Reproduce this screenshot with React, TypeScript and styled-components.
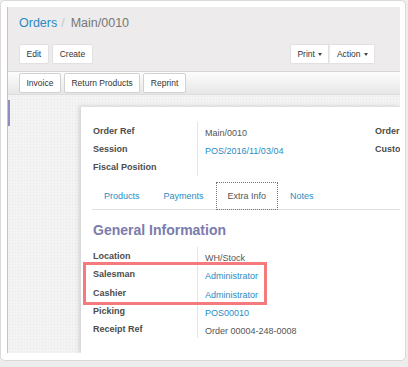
import React from 'react';
import styled, { createGlobalStyle, css } from 'styled-components';

const GlobalStyle = createGlobalStyle`
  html, body {
    margin: 0;
    padding: 0;
    background: #ededed;
    font-family: "Liberation Sans", Arial, Helvetica, sans-serif;
  }
  * { box-sizing: border-box; }
`;

const LINK = '#2a8cc4';

/** Frame */
const Frame = styled.div`
  width: 406px;
  height: 361px;
  background: #fff;
  border: 1px solid #dadada;
  border-radius: 5px;
  padding: 6px 5px 7px 6px;
`;

const Screen = styled.div`
  position: relative;
  height: 100%;
  display: flex;
  flex-direction: column;
  border-left: 1px solid #c4c4c4;
  overflow: hidden;
`;

/** Control panel */
const ControlPanel = styled.div`
  background: #edebeb;
  height: 64px;
  padding: 6px 25px 0 11px;
  display: flex;
  flex-direction: column;
`;

const Breadcrumb = styled.div`
  font-size: 12.5px;
  line-height: 20px;
  color: #777;
  display: flex;
  gap: 4px;
`;

const Crumb = styled.span<{ link?: boolean }>`
  color: ${p => (p.link ? LINK : '#777')};
`;

const Sep = styled.span`
  color: #c8c8c8;
  margin-right: 2px;
`;

const ButtonsRow = styled.div`
  margin-top: 11px;
  display: flex;
  justify-content: space-between;
`;

const ButtonGroup = styled.div<{ joined?: boolean }>`
  display: flex;
  gap: ${p => (p.joined ? '0' : '3.5px')};
`;

const Button = styled.button<{ joined?: boolean; grad?: boolean }>`
  height: 20px;
  padding: 0 6.5px;
  font-family: inherit;
  font-size: 8.5px;
  color: #333;
  background: #fff;
  border: 1px solid #e2e0e0;
  border-radius: 2px;
  display: flex;
  align-items: center;
  gap: 3px;
  ${p =>
    p.joined &&
    css`
      border-radius: 0;
      &:first-child {
        border-radius: 2px 0 0 2px;
      }
      &:last-child {
        border-radius: 0 2px 2px 0;
        border-left-color: #eaeaea;
      }
    `}
  ${p =>
    p.grad &&
    css`
      border-color: #d2d2d2;
    `}
`;

const Caret = styled.span`
  width: 0;
  height: 0;
  border-left: 2.5px solid transparent;
  border-right: 2.5px solid transparent;
  border-top: 3px solid #444;
  margin-top: 1px;
`;

/** Status bar */
const StatusBar = styled.div`
  height: 24px;
  border-top: 1px solid #d6d6d6;
  border-bottom: 1px solid #dcdcdc;
  background: linear-gradient(#fdfdfd, #e6e6e6);
  padding: 0 0 0 11px;
  display: flex;
  align-items: center;
  gap: 3px;
`;

/** Sheet area */
const SheetArea = styled.div`
  flex: 1;
  display: flex;
  background-color: #f3f3f3;
  background-image: radial-gradient(#e8e8e8 0.6px, transparent 0.8px);
  background-size: 3px 3px;
  min-height: 0;
`;

const Sidebar = styled.div`
  width: 73px;
  flex-shrink: 0;
  padding-top: 5px;
`;

const MenuMarker = styled.div`
  width: 2px;
  height: 26px;
  background: #8e8dbf;
`;

const Sheet = styled.div`
  flex: 1;
  margin-top: 11px;
  background: #fff;
  border-top: 1px solid #e2e2e2;
  box-shadow: -2px 0 4px rgba(0, 0, 0, 0.14);
  padding: 15px 0 0 12px;
  overflow: hidden;
  font-size: 9px;
`;

const TopGroups = styled.div`
  display: flex;
  width: 400px;
`;

const Group = styled.div<{ width?: number; rowH?: number }>`
  display: grid;
  grid-template-columns: 104px 1fr;
  grid-auto-rows: ${p => p.rowH || 18}px;
  width: ${p => (p.width ? `${p.width}px` : 'auto')};
  flex-shrink: 0;
  line-height: ${p => p.rowH || 18}px;
`;

const Label = styled.div`
  font-weight: bold;
  color: #4c4c4c;
  white-space: nowrap;
`;

const Value = styled.div<{ link?: boolean }>`
  border-left: 1px solid #e4e4e4;
  padding: 2px 0 0 7px;
  color: ${p => (p.link ? LINK : '#555')};
  white-space: nowrap;
`;

const RightLabel = styled.div`
  font-weight: bold;
  color: #4c4c4c;
  line-height: 18px;
`;

/** Tabs */
const Tabs = styled.div`
  margin: 6px 0 0 -1px;
  display: flex;
  height: 28px;
  border-bottom: 1px solid #e2e2e2;
  width: 400px;
`;

const Tab = styled.div<{ active?: boolean }>`
  padding: 0 11px;
  line-height: 26px;
  height: 28px;
  color: ${p => (p.active ? '#555' : LINK)};
  border: 1px dotted ${p => (p.active ? '#777' : 'transparent')};
`;

const Heading = styled.h2`
  margin: 10px 0 7px;
  font-size: 14px;
  line-height: 20px;
  font-weight: bold;
  color: #7c7bad;
`;

/** Annotation */
const Highlight = styled.div`
  position: absolute;
  left: 75px;
  top: 255px;
  width: 184px;
  height: 43px;
  border: 3px solid #f47a7e;
`;

const topRows: [string, string, boolean][] = [
  ['Order Ref', 'Main/0010', false],
  ['Session', 'POS/2016/11/03/04', true],
  ['Fiscal Position', '', false],
];

const infoRows: [string, string, boolean][] = [
  ['Location', 'WH/Stock', false],
  ['Salesman', 'Administrator', true],
  ['Cashier', 'Administrator', true],
  ['Picking', 'POS00010', true],
  ['Receipt Ref', 'Order 00004-248-0008', false],
];

const tabs = ['Products', 'Payments', 'Extra Info', 'Notes'];

export default function App() {
  return (
    <>
      <GlobalStyle />
      <Frame>
        <Screen>
          <ControlPanel>
            <Breadcrumb>
              <Crumb link>Orders</Crumb>
              <Sep>/</Sep>
              <Crumb>Main/0010</Crumb>
            </Breadcrumb>
            <ButtonsRow>
              <ButtonGroup>
                <Button>Edit</Button>
                <Button>Create</Button>
              </ButtonGroup>
              <ButtonGroup joined>
                <Button joined>
                  Print <Caret />
                </Button>
                <Button joined>
                  Action <Caret />
                </Button>
              </ButtonGroup>
            </ButtonsRow>
          </ControlPanel>
          <StatusBar>
            <Button grad>Invoice</Button>
            <Button grad>Return Products</Button>
            <Button grad>Reprint</Button>
          </StatusBar>
          <SheetArea>
            <Sidebar>
              <MenuMarker />
            </Sidebar>
            <Sheet>
              <TopGroups>
                <Group width={282}>
                  {topRows.map(([label, value, link]) => (
                    <React.Fragment key={label}>
                      <Label>{label}</Label>
                      <Value link={link}>{value}</Value>
                    </React.Fragment>
                  ))}
                </Group>
                <div>
                  <RightLabel>Order</RightLabel>
                  <RightLabel>Customer</RightLabel>
                </div>
              </TopGroups>
              <Tabs>
                {tabs.map(t => (
                  <Tab key={t} active={t === 'Extra Info'}>
                    {t}
                  </Tab>
                ))}
              </Tabs>
              <Heading>General Information</Heading>
              <Group rowH={18.25}>
                {infoRows.map(([label, value, link]) => (
                  <React.Fragment key={label}>
                    <Label>{label}</Label>
                    <Value link={link}>{value}</Value>
                  </React.Fragment>
                ))}
              </Group>
            </Sheet>
          </SheetArea>
          <Highlight />
        </Screen>
      </Frame>
    </>
  );
}
